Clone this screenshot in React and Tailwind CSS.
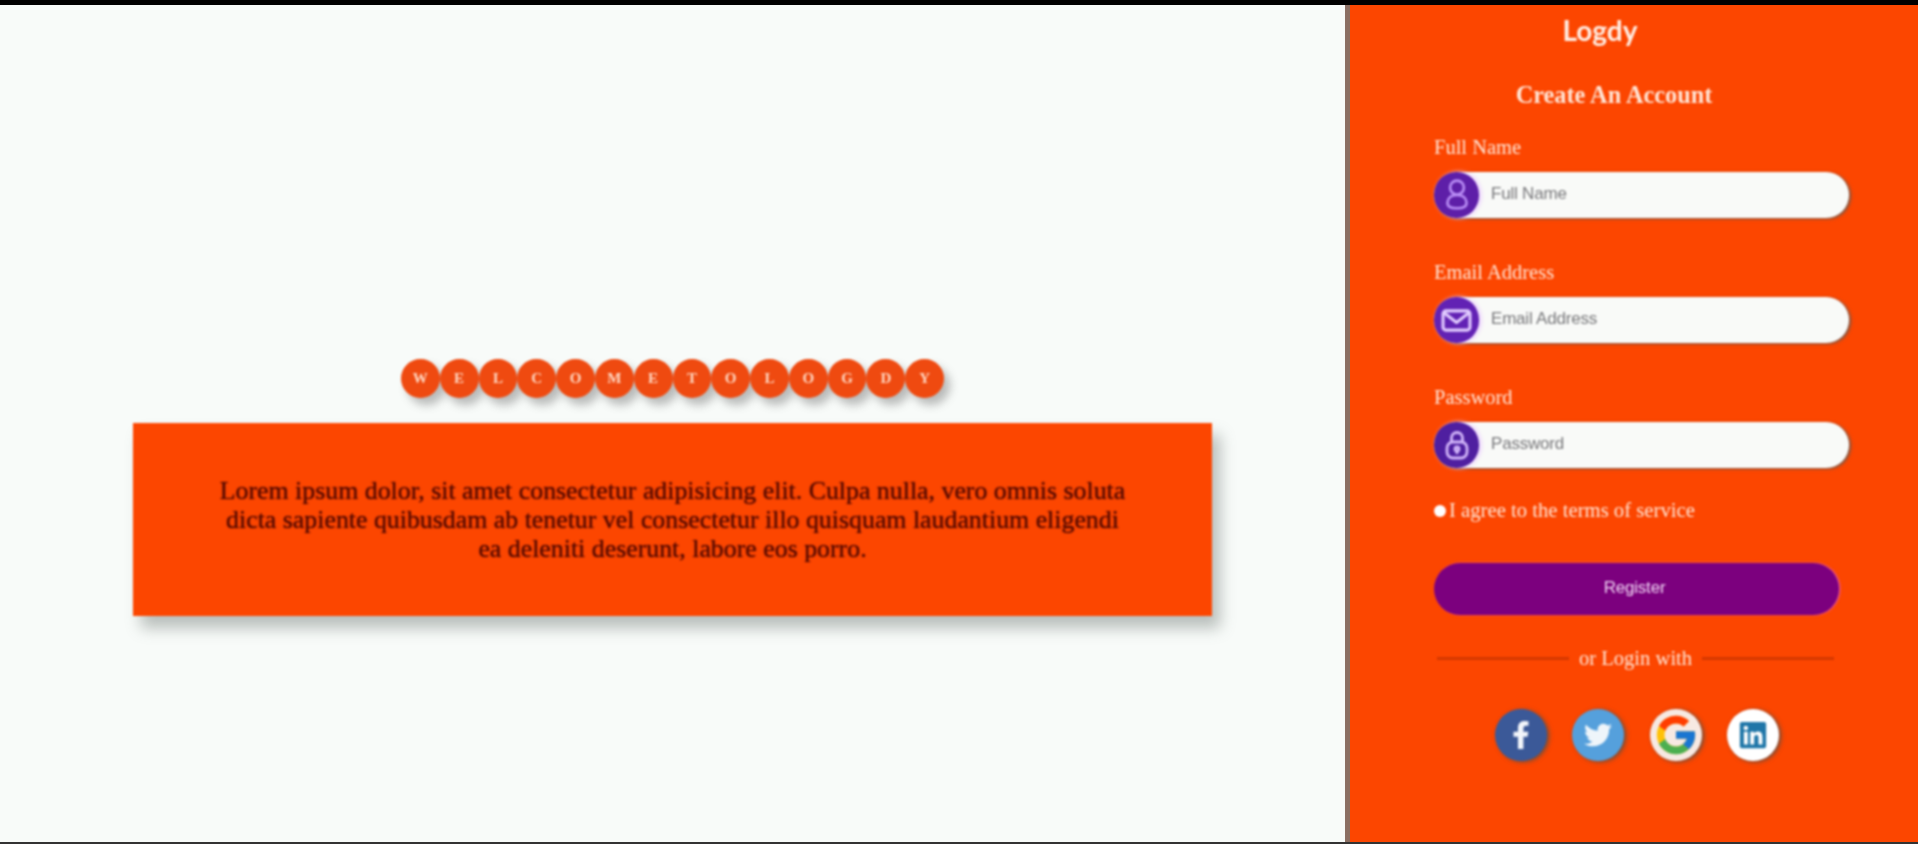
import { FaFacebookF, FaTwitter, FaLinkedin } from 'react-icons/fa';
import { FcGoogle } from 'react-icons/fc';

const letters = 'WELCOMETOLOGDY'.split( '' );

const UserIcon = () => (
	<svg width="30" height="34" viewBox="0 0 28 32" fill="none" stroke="#bb8ff7" strokeWidth="2.5">
		<circle cx="14" cy="9" r="6.5" />
		<path d="M14 16c-6 0-9 3.5-9 7.5 0 3 3 5 9 5s9-2 9-5c0-4-3-7.5-9-7.5z" />
	</svg>
);

const MailIcon = () => (
	<svg width="31" height="25" viewBox="0 0 32 26" fill="none" stroke="#e2ccff" strokeWidth="3.2" strokeLinejoin="round">
		<rect x="2" y="3" width="28" height="20" rx="3" />
		<path d="M3 5l13 10L29 5" />
	</svg>
);

const LockIcon = () => (
	<svg width="26" height="30" viewBox="0 0 26 30" fill="none" stroke="#d2b6fa" strokeWidth="2.8">
		<path d="M7.5 13V8a5.5 5.5 0 0 1 11 0v5" />
		<rect x="3" y="12" width="20" height="16" rx="6" />
		<circle cx="13" cy="19" r="2" />
		<path d="M13 21v3" />
	</svg>
);

const Field = ( { label, type, icon, circle } ) => (
	<div className="flex flex-col gap-3">
		<label className="h-6 text-[20.5px] leading-[22px] text-[#ffe6d6]">{ label }</label>
		<div className="relative h-[46px] w-[415px] rounded-full bg-[#f9faf8] shadow-[2px_1px_3px_#7b5a4a]">
			<input
				type={ type }
				placeholder={ label }
				className="h-full w-full rounded-full bg-transparent pb-[3px] pl-[57px] font-['Liberation_Sans',sans-serif] text-[17px] tracking-[-0.2px] outline-none placeholder:text-[#77777a]"
			/>
			<div className={ `absolute left-0 top-0 flex h-[46px] w-[45px] items-center justify-center rounded-full ${ circle } shadow-[2px_0_4px_#e9c9ff]` }>
				{ icon }
			</div>
		</div>
	</div>
);

const Social = ( { className, children } ) => (
	<a href="#" className={ `flex h-[52px] w-[52px] items-center justify-center rounded-full shadow-[2px_1px_4px_rgba(90,80,70,0.9)] ${ className }` }>
		{ children }
	</a>
);

const App = () => {
	return (
		<div className="flex h-screen w-full flex-col overflow-hidden bg-black font-['Liberation_Serif',serif]">
			<div className="h-[5px] shrink-0 bg-black" />
			<div className="flex min-h-0 flex-1">
				<main className="flex-1 bg-[#f8fbf9] pt-[354px]">
					<div className="blur-[0.8px]">
						<div className="flex justify-center">
							{ letters.map( ( letter, i ) => (
								<span
									key={ i }
									className="flex h-[39px] w-[38.8px] items-center justify-center rounded-full bg-[#ef4a10] text-[15px] font-bold text-[#ffd9c4] shadow-[6px_7px_9px_rgba(90,90,90,0.4)]"
								>
									{ letter }
								</span>
							) ) }
						</div>
						<div className="mx-auto mt-[25px] flex h-[193px] w-[1079px] items-center bg-[#fc4600] px-[81px] shadow-[8px_12px_14px_rgba(90,100,95,0.4)]">
							<p className="text-center text-[25.85px] leading-[29px] text-[#540a00] [text-shadow:0_0_1.5px_#7a1400]">
								Lorem ipsum dolor, sit amet consectetur adipisicing elit. Culpa nulla, vero omnis soluta dicta sapiente quibusdam ab tenetur vel consectetur illo quisquam laudantium eligendi ea deleniti deserunt, labore eos porro.
							</p>
						</div>
					</div>
				</main>
				<aside className="w-[573px] shrink-0 border-l-[5px] border-[#8b6f63] bg-[#fc4600] pl-[84px] text-[#ffe6d6]">
					<div className="blur-[0.8px]">
						<div className="h-[50px] w-[332px] text-center font-['Lato',sans-serif] text-[28px] font-bold leading-[50px] text-[#fff0e6]">Logdy</div>
						<h2 className="mt-[25px] h-[30px] w-[360px] text-center text-[24.3px] font-bold leading-[30px]">Create An Account</h2>
						<div className="mt-[26px] flex flex-col gap-[43px]">
							<Field label="Full Name" type="text" icon={ <UserIcon /> } circle="bg-[#5e1fa8]" />
							<Field label="Email Address" type="email" icon={ <MailIcon /> } circle="bg-[#6222b4]" />
							<Field label="Password" type="password" icon={ <LockIcon /> } circle="bg-[#4f1fa0]" />
						</div>
						<div className="mt-[31px] flex h-6 items-center text-[20.7px]">
							<span className="h-3 w-3 shrink-0 rounded-full bg-white" />
							<span className="ml-[3px]">I agree to the terms of service</span>
						</div>
						<button className="mt-10 h-[52px] w-[405px] rounded-full bg-[#7c007e] pb-[2px] pr-[4px] font-['Liberation_Sans',sans-serif] text-[17px] tracking-[-0.2px] text-[#f0d4f4] shadow-[1px_0_2px_#e05ac8]">
							Register
						</button>
						<div className="mt-[31px] flex h-6 w-[400px] items-center gap-[10px] pl-[3px] text-[20.6px] leading-6">
							<span className="h-[3px] flex-1 bg-[#d43800]" />
							<span>or Login with</span>
							<span className="h-[3px] flex-1 bg-[#d43800]" />
						</div>
						<div className="mt-[39px] flex w-[406px] justify-center gap-[25.5px]">
							<Social className="bg-[#3b5998]"><FaFacebookF className="text-[28px] text-[#f2f5fa]" /></Social>
							<Social className="bg-[#55a0dc]"><FaTwitter className="text-[28px] text-[#eef5fa]" /></Social>
							<Social className="bg-[#f7e9e2]"><FcGoogle className="text-[46px]" /></Social>
							<Social className="bg-white"><FaLinkedin className="text-[30px] text-[#1f76a8]" /></Social>
						</div>
					</div>
				</aside>
			</div>
			<div className="h-[2px] shrink-0 bg-[#333]" />
		</div>
	);
};

export default App;
